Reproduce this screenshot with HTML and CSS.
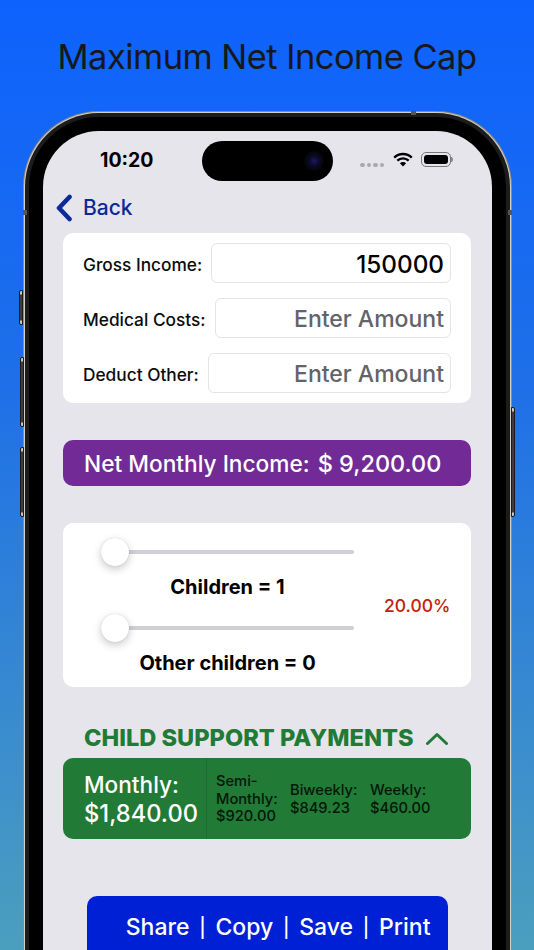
FILE: index.html
```html
<!DOCTYPE html>
<html lang="en">
<head>
<meta charset="utf-8">
<title>Maximum Net Income Cap</title>
<link rel="stylesheet" href="styles.css">
</head>
<body>
<h1 class="headline">Maximum Net Income Cap</h1>
<div class="phone">
  <span class="side side-mute"></span>
  <span class="side side-up"></span>
  <span class="side side-down"></span>
  <span class="side side-power"></span>
  <div class="bezel">
    <div class="screen">
      <div class="island"><span class="lens"></span></div>
      <div class="status">
        <span class="time">10:20</span>
        <div class="status-icons">
          <span class="dots"><i></i><i></i><i></i><i></i></span>
          <svg class="wifi" width="20" height="15" viewBox="0 0 20 15"><path d="M1.200 5.600A12.600 12.600 0 0 1 18.800 5.600" fill="none" stroke="#000" stroke-width="2.300"/><path d="M4.300 8.700A8.200 8.200 0 0 1 15.700 8.700" fill="none" stroke="#000" stroke-width="2.300"/><path d="M10 14.600 6.900 11.200A4.400 4.400 0 0 1 13.100 11.200Z" fill="#000"/></svg>
          <span class="battery"><span class="battery-fill"></span></span><span class="battery-cap"></span>
        </div>
      </div>
      <div class="nav">
        <svg class="back-chevron" width="18" height="28" viewBox="0 0 18 28"><path d="M14.500 3 4 14l10.500 11" fill="none" stroke="#0b2a9a" stroke-width="4.600" stroke-linecap="round" stroke-linejoin="round"/></svg>
        <span class="back-text">Back</span>
      </div>
      <section class="card inputs">
        <div class="field"><span class="label">Gross Income:</span><span class="box value">150000</span></div>
        <div class="field"><span class="label">Medical Costs:</span><span class="box hint">Enter Amount</span></div>
        <div class="field"><span class="label">Deduct Other:</span><span class="box hint">Enter Amount</span></div>
      </section>
      <div class="net"><span class="net-label">Net Monthly Income:</span><span class="net-value">$ 9,200.00</span></div>
      <section class="card sliders">
        <div class="slider-col">
          <div class="slider"><span class="thumb"></span></div>
          <div class="slider-label">Children = 1</div>
          <div class="slider"><span class="thumb"></span></div>
          <div class="slider-label">Other children = 0</div>
        </div>
        <div class="percent">20.00%</div>
      </section>
      <div class="pay-head">
        <span>CHILD SUPPORT PAYMENTS</span>
        <svg width="24" height="14" viewBox="0 0 24 14"><path d="M2.500 12.500 12 3.500l9.500 9" fill="none" stroke="#217a35" stroke-width="3" stroke-linecap="round" stroke-linejoin="round"/></svg>
      </div>
      <section class="pay">
        <div class="pay-main">Monthly:<br><span class="pay-amount">$1,840.00</span></div>
        <div class="pay-rest">
          <div class="pay-item semi">Semi-<br>Monthly:<br>$920.00</div>
          <div class="pay-item bi">Biweekly:<br>$849.23</div>
          <div class="pay-item week">Weekly:<br>$460.00</div>
        </div>
      </section>
      <div class="actions">
        <span>Share</span><span class="sep">|</span><span>Copy</span><span class="sep">|</span><span>Save</span><span class="sep">|</span><span>Print</span>
      </div>
    </div>
  </div>
  <span class="band band-left"></span>
  <span class="band band-right"></span>
  <span class="band band-top"></span>
</div>
</body>
</html>
```
FILE: styles.css
```css
* { box-sizing: border-box; }
html, body { margin: 0; height: 950px; overflow: hidden; }
body {
  width: 534px;
  background: linear-gradient(180deg, #0d62fe 0%, #1e6fe8 40%, #4b9fbe 100%);
  font-family: Inter, "Liberation Sans", sans-serif;
  color: #000;
}
.headline {
  margin: 0;
  height: 111px;
  padding-top: 35px;
  text-align: center;
  font-size: 34.500px;
  line-height: 44px;
  font-weight: 400;
  letter-spacing: -0.550px;
  color: #16181d;
}
.phone {
  position: relative;
  height: 839px;
  margin: 0 22px 0 23px;
  padding: 2px 2px 0;
}
.side {
  position: absolute;
  width: 4px;
  background: linear-gradient(180deg, #c9c5bb 0, #c9c5bb 3px, #3d3d40 4px, #3d3d40 calc(100% - 4px), #c9c5bb calc(100% - 3px));
  border: 1px solid #1b1b1c;
}
.side-mute { left: -4px; top: 179px; height: 35px; border-radius: 2px 0 0 2px; }
.side-up { left: -3px; top: 246px; height: 70px; border-radius: 2px 0 0 2px; }
.side-down { left: -3px; top: 336px; height: 70px; border-radius: 2px 0 0 2px; }
.side-power { right: -3px; top: 296px; height: 110px; border-radius: 0 2px 2px 0; }
.bezel {
  height: 100%;
  padding: 14px 14px 0;
  border: 4px solid #1c1c1c;
  border-bottom: 0;
  border-radius: 74px 74px 0 0;
  background: #000;
  box-shadow: 0 0 0 1px #d5d0c6, 0 0 0 2px #8f8b82;
}
.band { position: absolute; background: #55555a; }
.band-left { left: 0; top: 99px; width: 4px; height: 5px; }
.band-right { right: 0; top: 99px; width: 4px; height: 5px; }
.band-top { left: 388px; top: 0; width: 5px; height: 4px; }
.screen {
  position: relative;
  height: 100%;
  padding: 0 21px 0 20px;
  border-radius: 56px 56px 0 0;
  background: #e6e5ec;
  overflow: hidden;
}
.island {
  position: absolute;
  left: 159px;
  top: 10px;
  width: 131px;
  height: 40px;
  border-radius: 20px;
  background: #000;
}
.lens {
  position: absolute;
  right: 9px;
  top: 10px;
  width: 20px;
  height: 20px;
  border-radius: 50%;
  background: radial-gradient(circle, #1a1a6a 0, #0a0a24 35%, #050508 70%);
}
.status {
  display: flex;
  justify-content: space-between;
  align-items: center;
  height: 59px;
  padding: 0 18px 0 37px;
}
.time { font-size: 19.500px; font-weight: 700; line-height: 59px; }
.status-icons { display: flex; align-items: center; }
.dots { display: flex; gap: 2px; margin: 9px 9px 0 0; }
.dots i { width: 4.500px; height: 4.500px; border-radius: 50%; background: #a9a9ae; }
.wifi { margin: 0 8px 3px 0; }
.battery {
  display: block;
  width: 30px;
  height: 15px;
  padding: 2px;
  margin-bottom: 2px;
  border: 1px solid #77777b;
  border-radius: 5px;
}
.battery-fill { display: block; height: 100%; background: #000; border-radius: 3px; }
.battery-cap { width: 2px; height: 5px; margin-bottom: 2px; background: #8b8b8f; border-radius: 0 2px 2px 0; }
.nav {
  display: flex;
  align-items: center;
  gap: 10px;
  height: 35px;
  margin: 0 0 8px -8px;
}
.back-text { font-size: 21px; font-weight: 500; color: #0b2a9a; }
.card { background: #fff; border-radius: 10px; }
.inputs {
  display: flex;
  flex-direction: column;
  gap: 15px;
  height: 170px;
  padding: 10px 20px;
}
.field { display: flex; align-items: center; gap: 9px; height: 40px; }
.label { padding-top: 2px; font-size: 17.300px; font-weight: 500; white-space: nowrap; color: #0c0c0c; }
.box {
  flex: 1;
  height: 40px;
  padding-right: 6px;
  border: 1px solid #e4e4e8;
  border-radius: 6px;
  text-align: right;
  line-height: 40px;
  white-space: nowrap;
}
.value { font-size: 24.300px; font-weight: 500; }
.hint { font-size: 23px; font-weight: 500; color: #636368; }
.net {
  display: flex;
  gap: 8px;
  height: 46px;
  margin-top: 37px;
  padding-left: 21px;
  align-items: center;
  background: #722b96;
  border-radius: 10px;
  color: #fff;
  font-weight: 500;
}
.net-label { font-size: 22.700px; }
.net-value { font-size: 23.500px; }
.sliders {
  display: flex;
  height: 164px;
  margin-top: 37px;
  padding-left: 38px;
}
.slider-col { width: 253px; }
.slider {
  position: relative;
  height: 4px;
  margin-top: 27px;
  border-radius: 2px;
  background: #d0d0d4;
}
.thumb {
  position: absolute;
  left: 0;
  top: -12px;
  width: 28px;
  height: 28px;
  border-radius: 50%;
  background: #fff;
  box-shadow: 0 3px 8px rgba(0,0,0,.22), 0 0 1px rgba(0,0,0,.2);
}
.slider-label {
  margin-top: 21px;
  height: 24px;
  text-align: center;
  font-size: 20px;
  font-weight: 700;
  line-height: 24px;
  white-space: nowrap;
}
.percent {
  margin: 72px 0 0 30px;
  font-size: 17.500px;
  font-weight: 500;
  line-height: 22px;
  color: #c02408;
}
.pay-head {
  display: flex;
  align-items: center;
  gap: 11px;
  height: 41px;
  margin-top: 30px;
  padding-left: 21px;
  color: #217a35;
  font-size: 23.600px;
  font-weight: 800;
  white-space: nowrap;
}
.pay {
  display: flex;
  height: 81px;
  background: #217a35;
  border-radius: 10px;
}
.pay-main {
  width: 144px;
  padding: 13px 0 0 21px;
  color: #fff;
  font-size: 22.600px;
  line-height: 28.500px;
  font-weight: 500;
  border-right: 1px solid #1d6e30;
}
.pay-amount { font-size: 23.700px; }
.pay-rest { display: flex; align-items: center; flex: 1; padding: 2px 0 0 9px; }
.pay-item { font-size: 14.700px; line-height: 17.500px; font-weight: 500; color: #04180a; white-space: nowrap; }
.semi { width: 74px; }
.bi { width: 80px; }
.actions {
  display: flex;
  gap: 10px;
  justify-content: flex-end;
  width: 361px;
  height: 80px;
  margin: 57px 0 0 24px;
  padding: 17px 17.500px 0 0;
  background: #0020d6;
  border-radius: 10px;
  color: #fff;
  font-size: 23px;
  font-weight: 500;
}
.sep { font-family: "Liberation Sans", sans-serif; font-weight: 400; }
```
